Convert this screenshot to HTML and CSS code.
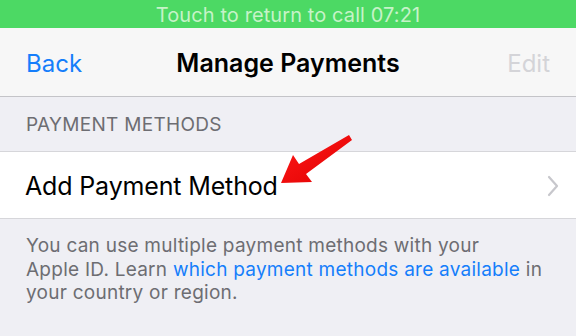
FILE: index.html
```html
<!DOCTYPE html>
<html>
<head>
<meta charset="utf-8">
<link rel="stylesheet" href="styles.css">
</head>
<body>
<div class="screen">
  <div class="callbar">Touch to return to call 07:21</div>
  <div class="navbar">
    <span class="back">Back</span>
    <span class="title">Manage Payments</span>
    <span class="edit">Edit</span>
  </div>
  <div class="section-header">PAYMENT METHODS</div>
  <div class="cell">
    <span class="cell-label">Add Payment Method</span>
    <svg class="chevron" width="12" height="22" viewBox="0 0 12 22"><path d="M2 2 L10 11 L2 20" fill="none" stroke="#c7c7cc" stroke-width="2.2" stroke-linecap="round" stroke-linejoin="round"/></svg>
  </div>
  <p class="footer">You can use multiple payment methods with your<br>Apple ID. Learn <span class="link">which payment methods are available</span> in<br>your country or region.</p>
  <svg class="arrow" width="576" height="336" viewBox="0 0 576 336">
    <defs>
      <linearGradient id="g" x1="0" y1="0" x2="1" y2="1">
        <stop offset="0" stop-color="#ff1a1a"/>
        <stop offset="1" stop-color="#e00000"/>
      </linearGradient>
    </defs>
    <polygon points="281,183 293,155 299,164 349,135 352,140 306,174 312,182" fill="url(#g)"/>
  </svg>
</div>
</body>
</html>
```
FILE: styles.css
```css
html, body { margin: 0; padding: 0; }
body { width: 576px; height: 336px; overflow: hidden; background: #efeff4; font-family: Inter, "Noto Sans", sans-serif; }
.screen { position: relative; width: 576px; height: 336px; display: flex; flex-direction: column; }
.callbar { height: 28px; background: #4cd964; color: #c6f3c8; font-size: 20px; letter-spacing: 0.1px; display: flex; align-items: center; justify-content: center; padding-top: 1px; box-sizing: border-box; white-space: nowrap; }
.navbar { height: 69px; background: #f7f7f7; border-bottom: 1px solid #c4c4c8; box-sizing: border-box; display: grid; grid-template-columns: 1fr auto 1fr; align-items: center; padding: 2px 26px 0 26px; font-size: 24px; }
.back { color: #157efb; justify-self: start; }
.title { font-weight: 600; color: #000; font-size: 25px; }
.edit { color: #d4d4d8; justify-self: end; }
.section-header { height: 54px; box-sizing: border-box; padding: 16px 26px 0; font-size: 19px; color: #6d6d72; letter-spacing: 0.3px; }
.cell { height: 68px; background: #fff; border-top: 1px solid #d6d6da; border-bottom: 1px solid #d6d6da; box-sizing: border-box; display: flex; align-items: center; justify-content: space-between; padding: 2px 17px 0 25px; }
.cell-label { font-size: 25px; color: #000; letter-spacing: -0.15px; }
.chevron { display: block; }
.footer { margin: 0; padding: 15px 10px 0 26px; font-size: 19px; line-height: 23.5px; color: #6d6d72; letter-spacing: 0.25px; white-space: nowrap; }
.link { color: #157efb; }
.arrow { position: absolute; left: 0; top: 0; }
```
